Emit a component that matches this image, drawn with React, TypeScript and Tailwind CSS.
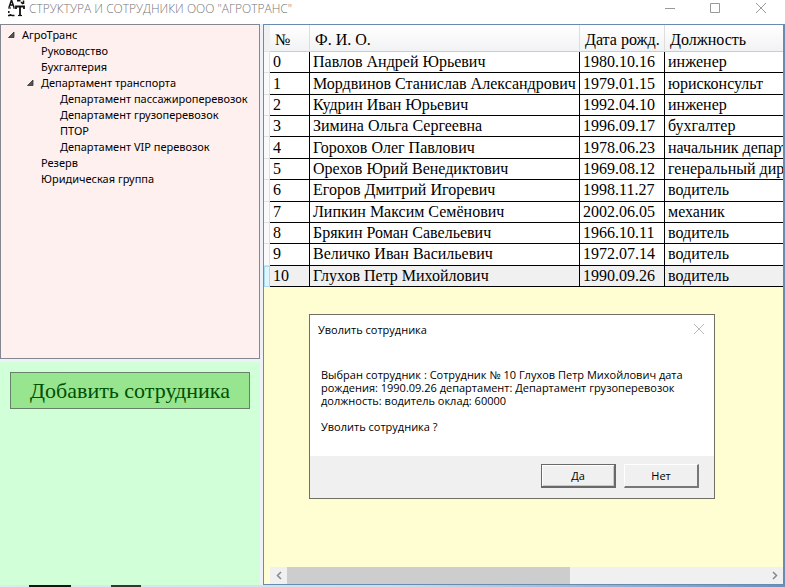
import React from "react";

type Department = { name: string; children?: Department[] };

const departments: Department = {
  name: "АгроТранс",
  children: [
    { name: "Руководство" },
    { name: "Бухгалтерия" },
    {
      name: "Департамент транспорта",
      children: [
        { name: "Департамент пассажироперевозок" },
        { name: "Департамент грузоперевозок" },
        { name: "ПТОР" },
        { name: "Департамент VIP перевозок" },
      ],
    },
    { name: "Резерв" },
    { name: "Юридическая группа" },
  ],
};

const employees = [
  ["Павлов Андрей Юрьевич", "1980.10.16", "инженер"],
  ["Мордвинов Станислав Александрович", "1979.01.15", "юрисконсульт"],
  ["Кудрин Иван Юрьевич", "1992.04.10", "инженер"],
  ["Зимина Ольга Сергеевна", "1996.09.17", "бухгалтер"],
  ["Горохов Олег Павлович", "1978.06.23", "начальник департамента"],
  ["Орехов Юрий Венедиктович", "1969.08.12", "генеральный директор"],
  ["Егоров Дмитрий Игоревич", "1998.11.27", "водитель"],
  ["Липкин Максим Семёнович", "2002.06.05", "механик"],
  ["Брякин Роман Савельевич", "1966.10.11", "водитель"],
  ["Величко Иван Васильевич", "1972.07.14", "водитель"],
  ["Глухов Петр Михойлович", "1990.09.26", "водитель"],
];

const SELECTED = 10;

function TreeNode({ node }: { node: Department }) {
  return (
    <li role="treeitem" aria-expanded={node.children ? true : undefined}>
      <div className="flex h-4 items-center">
        <span className="flex w-5 shrink-0 pl-[5px]">
          {node.children && (
            <svg width="8" height="8" viewBox="0 0 8 8" aria-hidden="true">
              <path d="M7 1v5.500H1.500z" fill="#555" stroke="#333" strokeWidth=".8" />
            </svg>
          )}
        </span>
        <span className="whitespace-nowrap">{node.name}</span>
      </div>
      {node.children && (
        <ul role="group" className="pl-[19px]">
          {node.children.map((child) => (
            <TreeNode key={child.name} node={child} />
          ))}
        </ul>
      )}
    </li>
  );
}

function TitleBar() {
  return (
    <header className="flex h-6 shrink-0 items-start bg-white pr-px pl-2 text-[#999]">
      <svg className="shrink-0" width="17" height="17" viewBox="0 0 17 17" fill="none" stroke="#111" aria-hidden="true">
        <path d="M1 7.500 3.500 0 6 7.500M2 5h3.500" strokeWidth="1.500" />
        <path d="M0 8h3M5 8h3" strokeWidth="1.200" />
        <path d="M8 9V6.500h8V9M12 6.500V15" strokeWidth="1.800" />
        <path d="M10 15.500h4" strokeWidth="1.200" />
        <path d="M9 .8h3.500M13 2l2 2M15.500.5V4M.8 11v2M1.500 14.500 4 15.500M4 15.500h2.500M0 15.500h2" strokeWidth="1.500" />
      </svg>
      <h1 className="ml-1 flex-1 truncate text-[12px] leading-[17px] font-light text-[#777]">СТРУКТУРА И СОТРУДНИКИ ООО "АГРОТРАНС"</h1>
      <button type="button" aria-label="Свернуть" className="flex h-4 w-[46px] items-center justify-center">
        <svg width="11" height="11" viewBox="0 0 11 11" stroke="currentColor"><path d="M0 5.500h10" /></svg>
      </button>
      <button type="button" aria-label="Развернуть" className="flex h-4 w-[45px] items-center justify-center">
        <svg width="11" height="11" viewBox="0 0 11 11" fill="none" stroke="currentColor"><path d="M.5.5h9v9h-9z" /></svg>
      </button>
      <button type="button" aria-label="Закрыть" className="flex h-4 w-[46px] items-center justify-center">
        <svg width="11" height="11" viewBox="0 0 11 11" stroke="currentColor"><path d="M0 0l10 10M10 0 0 10" /></svg>
      </button>
    </header>
  );
}

const headCell = "h-[27px] border-r border-[#ddd] border-b border-b-[#ccc] p-0 pt-[3px] pl-[5px] text-left font-normal whitespace-nowrap";
const bodyCell = "border-r border-b border-black p-0 pl-[3px] leading-[20px] whitespace-nowrap";

function EmployeeTable() {
  return (
    <table className="h-[262px] w-[620px] table-fixed border-separate border-spacing-0 bg-white font-['Liberation_Serif',serif] text-[16px] leading-[20px] text-black">
      <colgroup>
        <col className="w-[6px]" />
        <col className="w-[40px]" />
        <col className="w-[270px]" />
        <col className="w-[85px]" />
        <col />
      </colgroup>
      <thead>
        <tr className="h-[27px] bg-linear-to-b from-white to-[#f1f2f4]">
          <td className="border-b border-[#e5e5e5] bg-[#f0f1f3] p-0" />
          <th scope="col" className={headCell}>№</th>
          <th scope="col" className={headCell}>Ф. И. О.</th>
          <th scope="col" className={headCell}>Дата рожд.</th>
          <th scope="col" className={headCell}>Должность</th>
        </tr>
      </thead>
      <tbody>
        {employees.map(([name, born, position], index) => (
          <tr key={name} className={index === SELECTED ? "bg-[#f0f0f0]" : "bg-white"}>
            <td className={index === SELECTED ? "border border-[#a8dcf0] bg-[#dff4fc] p-0" : "border-r border-b border-[#dde2e8] bg-[#fafafa] p-0"} />
            <td className={bodyCell}>{index}</td>
            <td className={bodyCell}>{name}</td>
            <td className={bodyCell}>{born}</td>
            <td className={bodyCell}>{position}</td>
          </tr>
        ))}
      </tbody>
    </table>
  );
}

function HorizontalScrollbar() {
  return (
    <div className="ml-[6px] flex h-[17px] bg-[#f0f0f0] text-[#888]">
      <button type="button" aria-label="Прокрутить влево" className="flex w-[17px] items-center justify-center">
        <svg width="6" height="9" viewBox="0 0 6 9" fill="none" stroke="currentColor" strokeWidth="1.500"><path d="M5 1 1.500 4.500 5 8" /></svg>
      </button>
      <div className="flex flex-1">
        <div className="w-[59%] bg-[#cdcdcd]" />
      </div>
      <button type="button" aria-label="Прокрутить вправо" className="flex w-[17px] items-center justify-center">
        <svg width="6" height="9" viewBox="0 0 6 9" fill="none" stroke="currentColor" strokeWidth="1.500"><path d="M1 1l3.500 3.500L1 8" /></svg>
      </button>
    </div>
  );
}

function DismissDialog() {
  return (
    <div
      role="dialog"
      aria-labelledby="dismiss-title"
      className="absolute top-[289px] left-[45px] w-[406px] border border-[#716f64] bg-white text-[11px] leading-[13px] text-black"
    >
      <div className="flex items-center justify-between px-2 pt-[7px]">
        <h2 id="dismiss-title">Уволить сотрудника</h2>
        <button type="button" aria-label="Закрыть окно" className="p-px text-[#bbb]">
          <svg width="12" height="12" viewBox="0 0 12 12" stroke="currentColor"><path d="M1 1l10 10M11 1 1 11" /></svg>
        </button>
      </div>
      <div className="px-[11px] pt-8 pb-[23px]">
        <p>Выбран сотрудник : Сотрудник № 10 Глухов Петр Михойлович дата</p>
        <p>рождения: 1990.09.26 департамент: Департамент грузоперевозок</p>
        <p>должность: водитель оклад: 60000</p>
        <p className="pt-[13px]">Уволить сотрудника ?</p>
      </div>
      <div className="flex h-[42px] items-start justify-end gap-2 bg-[#f0f0f0] pt-2 pr-[15px]">
        <button type="button" className="h-6 w-[75px] border border-r-2 border-b-2 border-[#696969] bg-[#f0f0f0] shadow-[inset_1px_1px_0_#fff,inset_-1px_-1px_0_#c8c8c8]">
          Да
        </button>
        <button type="button" className="h-6 w-[75px] border border-r-2 border-b-2 border-t-white border-r-[#777] border-b-[#777] border-l-white bg-[#f0f0f0]">
          Нет
        </button>
      </div>
    </div>
  );
}

export default function App() {
  return (
    <div className="flex h-screen flex-col overflow-hidden bg-white font-['Open_Sans','Noto_Sans',sans-serif] text-[12px] text-black">
      <TitleBar />
      <main className="flex min-h-0 flex-1 gap-[3px] bg-[#eef1f8]">
        <aside className="flex w-[260px] shrink-0 flex-col">
          <nav aria-label="Структура" className="h-[335px] border border-[#828790] bg-[#fff0f0] pt-[2px] pl-px font-['Noto_Sans','Open_Sans',sans-serif] text-[11px] leading-[16px]">
            <ul role="tree">
              <TreeNode node={departments} />
            </ul>
          </nav>
          <div className="mt-[3px] flex-1 bg-[#d0ffd8] px-[10px] pt-[10px]">
            <button type="button" className="h-[37px] w-full border border-[#66806a] bg-[#97e58f] font-['Liberation_Serif',serif] text-[22px] leading-[34px] text-[#005000]">
              Добавить сотрудника
            </button>
          </div>
        </aside>
        <section aria-label="Сотрудники" className="relative flex min-w-0 flex-1 flex-col border border-r-2 border-[#688caf] bg-[#fffdd2]">
          <div className="min-h-0 flex-1 overflow-hidden">
            <EmployeeTable />
          </div>
          <HorizontalScrollbar />
          <DismissDialog />
        </section>
      </main>
      <footer className="flex h-[2px] shrink-0 bg-linear-to-r from-[#dcebf0] via-[#d0ddea] to-[#6e8fc0]">
        <div className="ml-[29px] w-[42px] bg-[#101810]" />
        <div className="ml-10 w-[30px] bg-[#303830]" />
      </footer>
    </div>
  );
}
